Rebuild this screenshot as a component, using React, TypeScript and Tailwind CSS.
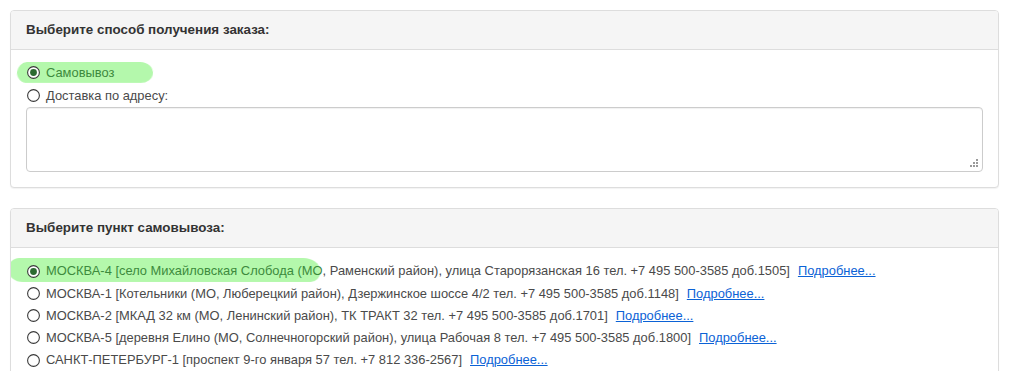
import React from "react";

type PickupPoint = {
  id: string;
  label: string;
  selected?: boolean;
};

const pickupPoints: PickupPoint[] = [
  {
    id: "msk4",
    label:
      "МОСКВА-4 [село Михайловская Слобода (МО, Раменский район), улица Старорязанская 16 тел. +7 495 500-3585 доб.1505]",
    selected: true,
  },
  {
    id: "msk1",
    label:
      "МОСКВА-1 [Котельники (МО, Люберецкий район), Дзержинское шоссе 4/2 тел. +7 495 500-3585 доб.1148]",
  },
  {
    id: "msk2",
    label: "МОСКВА-2 [МКАД 32 км (МО, Ленинский район), ТК ТРАКТ 32 тел. +7 495 500-3585 доб.1701]",
  },
  {
    id: "msk5",
    label:
      "МОСКВА-5 [деревня Елино (МО, Солнечногорский район), улица Рабочая 8 тел. +7 495 500-3585 доб.1800]",
  },
  {
    id: "spb1",
    label: "САНКТ-ПЕТЕРБУРГ-1 [проспект 9-го января 57 тел. +7 812 336-2567]",
  },
];

function Radio({ checked }: { checked?: boolean }) {
  return (
    <svg width="13" height="13" viewBox="0 0 13 13" className="shrink-0">
      <circle cx="6.5" cy="6.5" r="5.9" fill="white" stroke="#3a3a3a" strokeWidth="1.1" />
      {checked && <circle cx="6.5" cy="6.5" r="3.4" fill="#2c6a31" />}
    </svg>
  );
}

function Highlight({ className }: { className: string }) {
  return (
    <span
      aria-hidden
      className={`pointer-events-none absolute bg-[#b4f8ac] blur-[0.5px] ${className}`}
    />
  );
}

function Panel({ title, children }: { title: string; children: React.ReactNode }) {
  return (
    <section className="ml-[10px] w-[989px] overflow-hidden rounded-[4px] border border-[#dddddd] bg-white shadow-[0_1px_1px_rgba(0,0,0,0.05)]">
      <div className="h-[39px] border-b border-[#dddddd] bg-[#f5f5f5] px-[15px] text-[13.4px] font-bold leading-[38px] text-[#333333]">
        {title}
      </div>
      {children}
    </section>
  );
}

export default function App() {
  return (
    <div className="min-h-[371px] bg-white pt-[10px] font-['Liberation_Sans',Arial,sans-serif] text-[12.9px] text-[#4a4a4a]">
      <Panel title="Выберите способ получения заказа:">
        <div className="px-[15px] pb-[15px] pt-[11px]">
          <label className="relative flex h-[23px] items-center pl-px">
            <Highlight className="-left-[9px] top-[1px] h-[21px] w-[136px] rounded-[9px_14px_11px_12px/10px_12px_9px_11px] -skew-x-6" />
            <span className="relative flex items-center gap-[6px] text-[#3d8a3d]">
              <Radio checked />
              Самовывоз
            </span>
          </label>
          <label className="flex h-[23px] items-center gap-[6px] pl-px">
            <Radio />
            Доставка по адресу:
          </label>
          <div className="relative h-[65px] w-full rounded-[4px] border border-[#cccccc] bg-white shadow-[inset_0_1px_1px_rgba(0,0,0,0.06)]">
            <svg width="9" height="9" viewBox="0 0 9 9" className="absolute bottom-[3px] right-[3px]">
              <rect x="6" y="0" width="2" height="2" fill="#9a9a9a" />
              <rect x="3" y="3" width="2" height="2" fill="#9a9a9a" />
              <rect x="6" y="3" width="2" height="2" fill="#9a9a9a" />
              <rect x="0" y="6" width="2" height="2" fill="#9a9a9a" />
              <rect x="3" y="6" width="2" height="2" fill="#9a9a9a" />
              <rect x="6" y="6" width="2" height="2" fill="#9a9a9a" />
            </svg>
          </div>
        </div>
      </Panel>

      <div className="h-[20px]" />

      <Panel title="Выберите пункт самовывоза:">
        <div className="px-[15px] pb-[15px] pt-[12px]">
          {pickupPoints.map((point) => (
            <label key={point.id} className="relative flex h-[22.25px] items-center whitespace-nowrap pl-px">
              {point.selected && (
                <Highlight className="-left-[18px] top-[-2px] h-[24px] w-[312px] rounded-[12px_16px_10px_14px/12px_12px_10px_12px] skew-x-3" />
              )}
              <span className="relative flex items-center gap-[6px]">
                <Radio checked={point.selected} />
                <span>
                  {point.selected ? (
                    <>
                      <span className="text-[#3d8a3d]">МОСКВА-4 [село Михайловская Слобода (МО</span>
                      <span>
                        , Раменский район), улица Старорязанская 16 тел. +7 495 500-3585 доб.1505]
                      </span>
                    </>
                  ) : (
                    point.label
                  )}
                </span>
              </span>
              <a href="#" className="relative ml-[8px] text-[#0b62d6] underline">
                Подробнее...
              </a>
            </label>
          ))}
        </div>
      </Panel>
    </div>
  );
}
